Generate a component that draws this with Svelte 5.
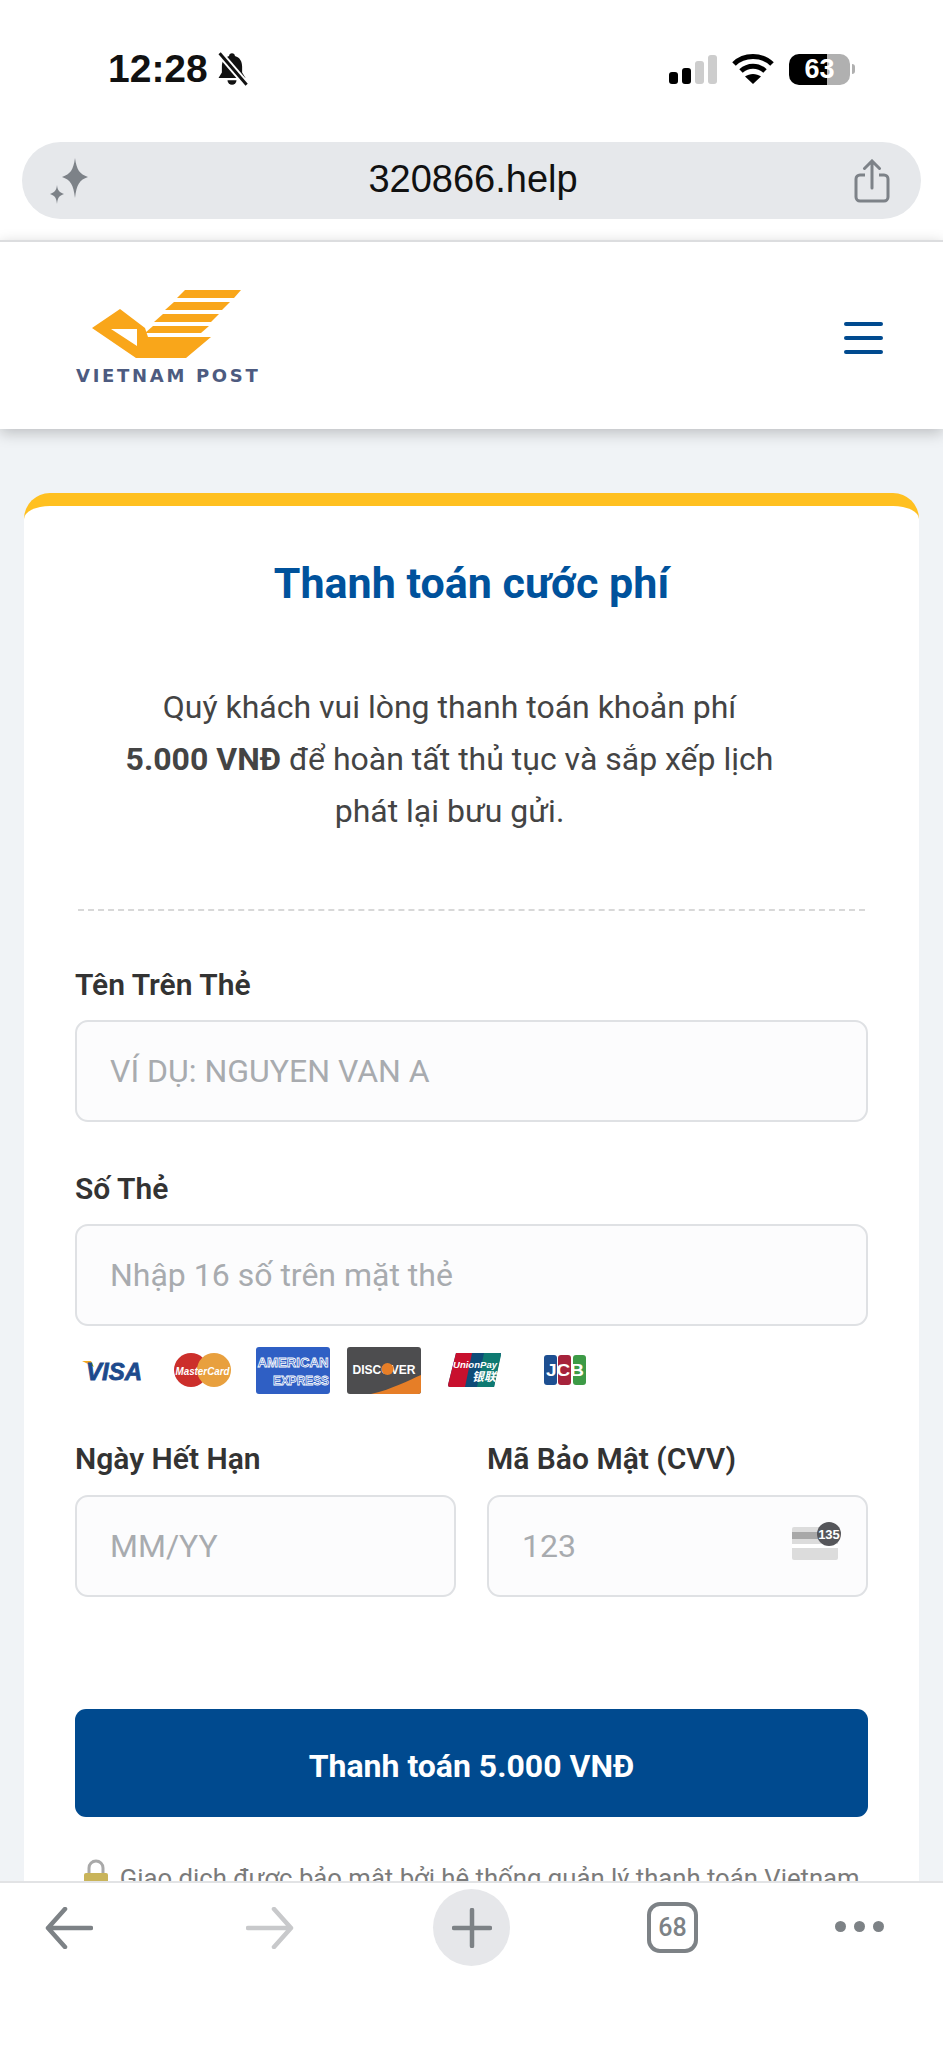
<script>
	const fields = { name: '', card: '', exp: '', cvv: '' };
</script>

<div class="screen">
	<div class="chrome">
		<div class="status">
			<div class="clock">
				<span>12:28</span>
				<svg width="36" height="36" viewBox="0 0 32 32">
					<path d="M16 2c1.500 0 2.500 1 2.600 2.400C23 5.600 25 9.200 25 14v5l3 5H4l3-5v-5c0-4.800 2-8.400 6.400-9.600C13.500 3 14.500 2 16 2z" fill="#111" />
					<path d="M12 26h8a4 4 0 0 1-8 0z" fill="#111" />
					<path d="M5 2l24 28" stroke="#fff" stroke-width="6" />
					<path d="M5 2l24 28" stroke="#111" stroke-width="2.600" />
				</svg>
			</div>
			<div class="indicators">
				<div class="signal">
					<i class="on" style="height:12px"></i>
					<i class="on" style="height:16px"></i>
					<i style="height:23px"></i>
					<i style="height:29px"></i>
				</div>
				<svg width="42" height="32" viewBox="0 0 42 32">
					<path d="M2 11C12 1 30 1 40 11" fill="none" stroke="#000" stroke-width="5" />
					<path d="M9 18c7-6.500 17-6.500 24 0" fill="none" stroke="#000" stroke-width="5" />
					<path d="M21 31l-8-7.500c4.500-3.500 11.500-3.500 16 0z" fill="#000" />
				</svg>
				<div class="battery"><b>63</b><span class="nub"></span></div>
			</div>
		</div>

		<div class="urlbar">
			<svg width="44" height="46" viewBox="0 0 44 46" fill="#7d8288">
				<path d="M27 0c1.700 12 4.500 16 13 19-8.500 3-11.300 7-13 21-1.700-14-4.500-18-13-21 8.500-3 11.300-7 13-19z" />
				<path d="M9 27c.7 5.500 2 7 7 9-5 2-6.300 3.500-7 10-.7-6.500-2-8-7-10 5-2 6.300-3.500 7-9z" />
			</svg>
			<span class="host">320866.help</span>
			<svg width="36" height="44" viewBox="0 0 36 44" fill="none" stroke="#7d8288" stroke-width="3">
				<path d="M11 16H6a4 4 0 0 0-4 4v18a4 4 0 0 0 4 4h24a4 4 0 0 0 4-4V20a4 4 0 0 0-4-4h-5" />
				<path d="M18 29V3M10.500 9.500L18 2l7.500 7.500" stroke-linecap="round" />
			</svg>
		</div>
	</div>

	<header class="site-header">
		<div class="logo">
			<svg width="150" height="72" viewBox="0 0 150 72" fill="#f9a61a">
				<path d="M94 0h56l-7 8H86z" />
				<path d="M83 12h56l-8 8H74z" />
				<path d="M72 24h56l-8 8H63z" />
				<path d="M62 36h56l-8 7H54z" />
				<path d="M29 19l-28 19 44 30h50l25-21H57L54 38 29 19zM20 39h26v17z" fill-rule="evenodd" />
			</svg>
			<span class="wordmark">VIETNAM POST</span>
		</div>
		<div class="burger"><i></i><i></i><i></i></div>
	</header>

	<main class="page">
		<section class="card">
			<h1>Thanh toán cước phí</h1>
			<p class="lead">
				Quý khách vui lòng thanh toán khoản phí<br />
				<strong>5.000 VNĐ</strong> để hoàn tất thủ tục và sắp xếp lịch<br />
				phát lại bưu gửi.
			</p>
			<div class="dash"></div>

			<label for="name">Tên Trên Thẻ</label>
			<input id="name" placeholder="VÍ DỤ: NGUYEN VAN A" bind:value={fields.name} />

			<label for="card" class="gap">Số Thẻ</label>
			<input id="card" placeholder="Nhập 16 số trên mặt thẻ" bind:value={fields.card} />

			<div class="brands">
				<svg class="visa" width="61" height="47" viewBox="0 -13 61 47">
					<path d="M0 1h9l3 6z" fill="#f2a81d" />
					<text x="60" y="20" text-anchor="end" textLength="56" lengthAdjust="spacingAndGlyphs">VISA</text>
				</svg>
				<svg class="mc" width="57" height="47" viewBox="0 -6 57 47">
					<circle cx="17" cy="17" r="17" fill="#cc2f2b" />
					<circle cx="40" cy="17" r="17" fill="#e8a03e" />
					<text x="28.500" y="21.500" text-anchor="middle" textLength="54" lengthAdjust="spacingAndGlyphs">MasterCard</text>
				</svg>
				<svg class="amex" width="74" height="47" viewBox="0 0 74 47">
					<rect width="74" height="47" rx="3" fill="#2f5fc4" />
					<text x="37" y="20" text-anchor="middle" textLength="71" lengthAdjust="spacingAndGlyphs">AMERICAN</text>
					<text x="73" y="38" text-anchor="end" textLength="56" lengthAdjust="spacingAndGlyphs">EXPRESS</text>
				</svg>
				<svg class="disc" width="74" height="47" viewBox="0 0 74 47">
					<defs><clipPath id="dc"><rect width="74" height="47" rx="3" /></clipPath></defs>
					<g clip-path="url(#dc)">
						<rect width="74" height="47" fill="#4d4d4f" />
						<path d="M24 47C46 42 62 33 74 28v19z" fill="#e67e27" />
					</g>
					<text x="37" y="26.500" text-anchor="middle" textLength="63" lengthAdjust="spacingAndGlyphs">DISCOVER</text>
					<circle cx="40.500" cy="22" r="6" fill="#e67e27" />
				</svg>
				<svg class="up" width="53" height="47" viewBox="0 -6 53 47">
					<path d="M8 0h45l-7 34H2a2 2 0 0 1-2-2z" fill="#0e4c78" />
					<path d="M8 0h16l-7 34H2a2 2 0 0 1-2-2z" fill="#c8102e" />
					<path d="M36 0h15a2 2 0 0 1 2 2l-7 32H29z" fill="#0e7a72" />
					<text x="5" y="15" textLength="44" lengthAdjust="spacingAndGlyphs">UnionPay</text>
					<text class="cn" x="24" y="28">银联</text>
				</svg>
				<svg class="jcb" width="42" height="47" viewBox="0 -8 42 47">
					<rect x="0" width="13" height="30" rx="3" fill="#1d4f91" />
					<rect x="14" width="13" height="30" rx="3" fill="#a6233b" />
					<rect x="29" width="13" height="30" rx="3" fill="#3d9a46" />
					<text x="21" y="21" text-anchor="middle" textLength="38" lengthAdjust="spacingAndGlyphs">JCB</text>
				</svg>
			</div>

			<div class="split">
				<div class="col">
					<label for="exp">Ngày Hết Hạn</label>
					<input id="exp" placeholder="MM/YY" bind:value={fields.exp} />
				</div>
				<div class="col">
					<label for="cvv">Mã Bảo Mật (CVV)</label>
					<div class="cvv-wrap">
						<input id="cvv" placeholder="123" bind:value={fields.cvv} />
						<svg class="cvv-icon" width="50" height="40" viewBox="0 0 50 40">
							<rect x="1" y="6" width="46" height="33" rx="2" fill="#dcdcdc" />
							<rect x="1" y="11" width="46" height="7" fill="#a8a8a8" />
							<rect x="1" y="23" width="46" height="4" fill="#fff" />
							<circle cx="38" cy="13" r="12" fill="#55565a" />
							<text x="38" y="17.500" text-anchor="middle">135</text>
						</svg>
					</div>
				</div>
			</div>

			<button class="pay">Thanh toán 5.000 VNĐ</button>

			<p class="secure">
				<svg width="26" height="32" viewBox="0 0 26 32">
					<path d="M6 15V9a7 7 0 0 1 14 0v6" fill="none" stroke="#a9a9a9" stroke-width="3" />
					<rect x="1" y="14" width="24" height="17" rx="2" fill="#c9b45a" />
				</svg>
				Giao dịch được bảo mật bởi hệ thống quản lý thanh toán Vietnam Post.
			</p>
		</section>
	</main>

	<nav class="toolbar">
		<svg width="48" height="42" viewBox="0 0 48 42" fill="none" stroke="#7d8286" stroke-width="4.500" stroke-linecap="round" stroke-linejoin="round">
			<path d="M46 21H3M20 2L3 21l17 19" />
		</svg>
		<svg width="48" height="42" viewBox="0 0 48 42" fill="none" stroke="#c8c9cb" stroke-width="4.500" stroke-linecap="round" stroke-linejoin="round">
			<path d="M2 21h43M28 2l17 19-17 19" />
		</svg>
		<div class="plus">
			<svg width="40" height="40" viewBox="0 0 40 40" stroke="#7d8286" stroke-width="4.500" stroke-linecap="round">
				<path d="M20 2v36M2 20h36" />
			</svg>
		</div>
		<div class="tabs">68</div>
		<div class="dots"><i></i><i></i><i></i></div>
	</nav>
</div>

<style>
	:global(body) {
		margin: 0;
		background: #fff;
	}

	.screen {
		position: relative;
		width: 943px;
		height: 2048px;
		overflow: hidden;
		background: #f0f3f6;
		font-family: Roboto, "Liberation Sans", sans-serif;
		color: #333;
	}

	/* phone chrome */
	.chrome {
		padding-bottom: 21px;
		background: #fff;
	}

	.status {
		display: flex;
		justify-content: space-between;
		align-items: center;
		height: 142px;
		box-sizing: border-box;
		padding: 0 93px 4px 108px;
	}

	.clock {
		display: flex;
		align-items: center;
		gap: 6px;
		font-family: "Liberation Sans", Roboto, sans-serif;
		font-size: 39px;
		font-weight: 700;
		color: #111;
	}

	.indicators {
		display: flex;
		align-items: center;
		gap: 15px;
	}

	.signal {
		display: flex;
		align-items: flex-end;
		gap: 4px;
		height: 29px;
	}

	.signal i {
		width: 9px;
		border-radius: 3px;
		background: #cdcdcd;
	}

	.signal i.on {
		background: #000;
	}

	.battery {
		position: relative;
		display: flex;
		align-items: center;
		justify-content: center;
		width: 61px;
		height: 31px;
		border-radius: 10px;
		background: linear-gradient(90deg, #000 0 63%, #b0b0b0 63%);
	}

	.battery b {
		font-family: "Liberation Sans", Roboto, sans-serif;
		font-size: 27px;
		font-weight: 700;
		color: #fff;
	}

	.nub {
		position: absolute;
		right: -5px;
		top: 10px;
		width: 3px;
		height: 10px;
		border-radius: 0 3px 3px 0;
		background: #b0b0b0;
	}

	.urlbar {
		display: flex;
		align-items: center;
		justify-content: space-between;
		height: 77px;
		margin: 0 22px;
		padding: 0 31px 0 26px;
		border-radius: 39px;
		background: #e6e8eb;
	}

	.host {
		margin-top: -3px;
		font-family: "Liberation Sans", Roboto, sans-serif;
		font-size: 38px;
		color: #111;
	}

	.site-header {
		display: flex;
		align-items: center;
		justify-content: space-between;
		height: 189px;
		box-sizing: border-box;
		padding: 4px 60px 0 76px;
		border-top: 2px solid #dcdddf;
		background: #fff;
		box-shadow: 0 4px 14px rgba(0, 0, 0, 0.22);
		position: relative;
	}

	.logo {
		display: flex;
		flex-direction: column;
		align-items: flex-start;
		gap: 3px;
		width: 182px;
	}

	.logo svg {
		display: block;
		margin-left: 15px;
	}

	.wordmark {
		font-family: "DejaVu Sans", sans-serif;
		font-size: 18px;
		font-weight: 700;
		letter-spacing: 2.700px;
		white-space: nowrap;
		color: #4d5b80;
	}

	.burger {
		display: flex;
		flex-direction: column;
		gap: 10px;
	}

	.burger i {
		width: 39px;
		height: 4px;
		border-radius: 2px;
		background: #004a8f;
	}

	/* card */
	.page {
		padding: 64px 24px 0;
	}

	.card {
		box-sizing: border-box;
		padding: 51px 51px 0;
		border-top: 13px solid #ffc020;
		border-radius: 26px 26px 0 0;
		background: #fff;
	}

	h1 {
		margin: 0;
		text-align: center;
		font-size: 43px;
		line-height: 52px;
		font-weight: 700;
		color: #00529c;
	}

	.lead {
		margin: 72px 44px 0 0;
		text-align: center;
		font-size: 32px;
		line-height: 52px;
		color: #444;
	}

	.lead strong {
		font-weight: 700;
	}

	.dash {
		margin: 72px 3px 0;
		border-top: 2px dashed #d8d8d8;
	}

	label {
		display: block;
		margin: 57px 0 18px;
		font-size: 30px;
		line-height: 34px;
		font-weight: 600;
		color: #333;
	}

	label.gap {
		margin-top: 50px;
	}

	input {
		display: block;
		box-sizing: border-box;
		width: 100%;
		height: 102px;
		padding: 0 33px;
		border: 2.500px solid #dfe1e4;
		border-radius: 13px;
		background: #fcfcfd;
		font-family: inherit;
		font-size: 32px;
		outline: none;
	}

	input::placeholder {
		color: #a8abaf;
		opacity: 1;
	}

	.brands {
		display: flex;
		align-items: center;
		height: 47px;
		margin: 21px 0 0 7px;
	}

	.brands svg {
		display: block;
		flex: none;
	}

	.brands text {
		font-family: "Liberation Sans", sans-serif;
		font-weight: 700;
		fill: #fff;
	}

	.mc {
		margin-left: 31px;
	}

	.amex {
		margin-left: 25px;
	}

	.disc {
		margin-left: 17px;
	}

	.up {
		margin-left: 27px;
	}

	.jcb {
		margin-left: 43px;
	}

	.brands .visa text {
		font-size: 24px;
		font-style: italic;
		font-weight: 800;
		fill: #1d4a8c;
		stroke: #1d4a8c;
		stroke-width: 0.8px;
	}

	.mc text {
		font-size: 11px;
		font-style: italic;
	}

	.brands .amex text {
		font-size: 13.500px;
		fill: #2f5fc4;
		stroke: #fff;
		stroke-width: 0.8px;
	}

	.disc text {
		font-size: 12px;
	}

	.up text {
		font-size: 9.500px;
		font-style: italic;
	}

	.up text.cn {
		font-family: "Noto Sans CJK SC", sans-serif;
		font-size: 12px;
	}

	.jcb text {
		font-size: 16px;
	}

	.split {
		display: grid;
		grid-template-columns: 381px 381px;
		column-gap: 31px;
	}

	.split label {
		margin: 48px 0 19px;
	}

	.cvv-wrap {
		position: relative;
	}

	.cvv-icon {
		position: absolute;
		right: 27px;
		top: 26px;
	}

	.cvv-icon text {
		font-family: "Liberation Sans", sans-serif;
		font-size: 13px;
		font-weight: 700;
		fill: #fff;
	}

	.pay {
		display: block;
		width: 100%;
		height: 108px;
		margin-top: 112px;
		padding-top: 6px;
		border: 0;
		border-radius: 11px;
		background: #004a8f;
		font-family: inherit;
		font-size: 32px;
		font-weight: 700;
		color: #fff;
	}

	.secure {
		margin: 42px 0 0;
		text-align: center;
		font-size: 25.700px;
		line-height: 36px;
		color: #7b7b7b;
	}

	.secure svg {
		margin-right: 4px;
		vertical-align: -4px;
	}

	/* bottom browser bar sits over the scrolled page */
	.toolbar {
		position: absolute;
		left: 0;
		right: 0;
		top: 1881px;
		bottom: 0;
		border-top: 2px solid #e2e3e5;
		background: #fff;
	}

	.toolbar > * {
		position: absolute;
	}

	.toolbar > svg:nth-child(1) {
		left: 45px;
		top: 24px;
	}

	.toolbar > svg:nth-child(2) {
		left: 246px;
		top: 24px;
	}

	.plus {
		left: 433px;
		top: 6px;
		display: flex;
		align-items: center;
		justify-content: center;
		width: 77px;
		height: 77px;
		border-radius: 50%;
		background: #e6e7ea;
	}

	.tabs {
		left: 647px;
		top: 19px;
		box-sizing: border-box;
		display: flex;
		align-items: center;
		justify-content: center;
		width: 51px;
		height: 51px;
		border: 4.500px solid #7d8286;
		border-radius: 13px;
		font-size: 25px;
		font-weight: 500;
		color: #7d8286;
	}

	.dots {
		left: 835px;
		top: 38px;
		display: flex;
		gap: 8px;
	}

	.dots i {
		width: 11px;
		height: 11px;
		border-radius: 50%;
		background: #7d8286;
	}
</style>
